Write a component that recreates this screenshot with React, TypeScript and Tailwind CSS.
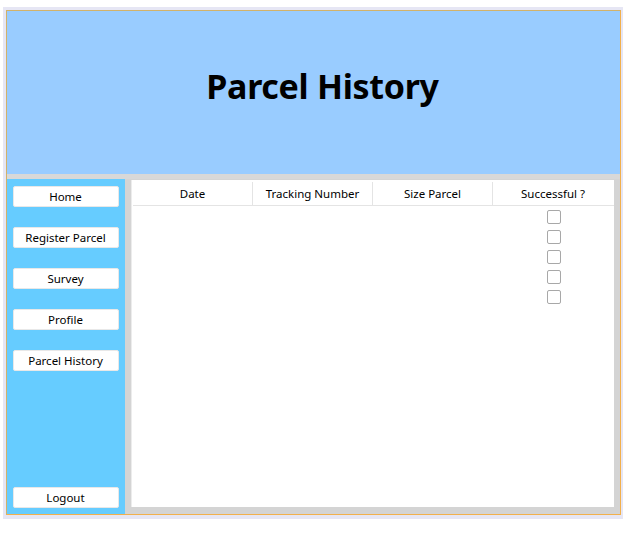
import React from "react";

const navItems = ["Home", "Register Parcel", "Survey", "Profile", "Parcel History"];
const cols = ["Date", "Tracking Number", "Size Parcel", "Successful ?"];

function Btn({ label }: { label: string }) {
  return (
    <div className="w-[106px] h-[21px] bg-white rounded-[2px] border border-[#e8e8e8] flex items-center justify-center text-[11.5px] text-black leading-none pt-[1px]">
      {label}
    </div>
  );
}

export default function App() {
  return (
    <div
      className="w-[642px] h-[535px] bg-white pt-[7px] pl-[3px]"
      style={{ fontFamily: '"Noto Sans", "Open Sans", sans-serif' }}
    >
      <div className="w-[620px] h-[512px] bg-[#e6e6f4] pl-[3px] pt-[3px]">
        <div className="w-[615px] h-[505px] border-l border-t border-l-[#d2b26a] border-t-[#d2b26a] border-r border-b border-r-[#f2b04c] border-b-[#f2b04c] flex flex-col">
          <div className="h-[163px] bg-[#99ccff] flex items-center justify-center pl-[18px]">
            <h1 className="text-[34px] font-bold text-black tracking-[-0.3px] mt-[-12px]">Parcel History</h1>
          </div>
          <div className="h-[5px] bg-[#d8d8d8]" />
          <div className="flex-1 flex min-h-0">
            <div className="w-[118px] bg-[#66ccff] flex flex-col items-center pr-[1px] pt-[7px] pb-[6px]">
              <div className="flex flex-col gap-[20px]">
                {navItems.map((n) => (
                  <Btn key={n} label={n} />
                ))}
              </div>
              <div className="mt-auto">
                <Btn label="Logout" />
              </div>
            </div>
            <div className="flex-1 bg-[#d4d4d4] pl-[6px] pt-[1px] pr-[6px] pb-[7px] flex">
              <div className="flex-1 bg-white border-l border-[#ececec] pl-[1px] flex flex-col">
                <div className="h-[26px] flex border-b border-[#e4e4e4] pt-[2px]">
                  {cols.map((c, i) => (
                    <div
                      key={c}
                      className={`w-[120px] flex items-center justify-center text-[11.5px] text-black ${i < 3 ? "border-r border-[#e4e4e4]" : ""}`}
                    >
                      {c}
                    </div>
                  ))}
                </div>
                <div className="flex pt-[4px]">
                  <div className="w-[360px]" />
                  <div className="w-[120px] flex flex-col items-center gap-[6px] pl-[2px]">
                    {[0, 1, 2, 3, 4].map((i) => (
                      <div key={i} className="w-[14px] h-[14px] rounded-[2px] border border-[#a8a8a8] bg-white" />
                    ))}
                  </div>
                </div>
              </div>
            </div>
          </div>
        </div>
      </div>
    </div>
  );
}
